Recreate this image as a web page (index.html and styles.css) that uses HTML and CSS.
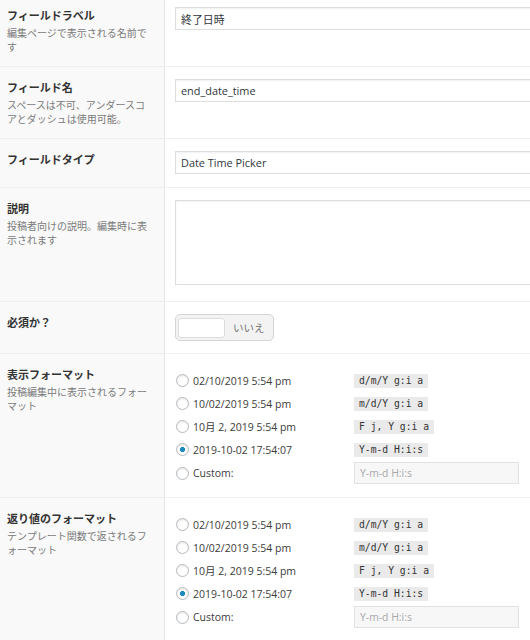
FILE: index.html
```html
<!DOCTYPE html>
<html lang="ja">
<head>
<meta charset="utf-8">
<title>ACF field settings</title>
<link rel="stylesheet" href="styles.css">
</head>
<body>
<div class="fields">
  <div class="row">
    <div class="label">
      <span class="title">フィールドラベル</span>
      <p class="desc">編集ページで表示される名前です</p>
    </div>
    <div class="cell">
      <input class="text" type="text" value="終了日時">
    </div>
  </div>

  <div class="row">
    <div class="label">
      <span class="title">フィールド名</span>
      <p class="desc">スペースは不可、アンダースコアとダッシュは使用可能。</p>
    </div>
    <div class="cell">
      <input class="text" type="text" value="end_date_time">
    </div>
  </div>

  <div class="row">
    <div class="label">
      <span class="title">フィールドタイプ</span>
    </div>
    <div class="cell">
      <div class="select">Date Time Picker</div>
    </div>
  </div>

  <div class="row">
    <div class="label">
      <span class="title">説明</span>
      <p class="desc">投稿者向けの説明。編集時に表示されます</p>
    </div>
    <div class="cell">
      <textarea class="area"></textarea>
    </div>
  </div>

  <div class="row">
    <div class="label">
      <span class="title">必須か？</span>
    </div>
    <div class="cell cell-switch">
      <div class="switch"><span class="slider"></span><span class="switch-text">いいえ</span></div>
    </div>
  </div>

  <div class="row">
    <div class="label">
      <span class="title">表示フォーマット</span>
      <p class="desc">投稿編集中に表示されるフォーマット</p>
    </div>
    <div class="cell cell-list">
      <ul class="radios">
        <li><label class="opt"><input type="radio" name="df">02/10/2019 5:54 pm</label><code>d/m/Y g:i a</code></li>
        <li><label class="opt"><input type="radio" name="df">10/02/2019 5:54 pm</label><code>m/d/Y g:i a</code></li>
        <li><label class="opt"><input type="radio" name="df">10月 2, 2019 5:54 pm</label><code>F j, Y g:i a</code></li>
        <li><label class="opt"><input type="radio" name="df" checked>2019-10-02 17:54:07</label><code>Y-m-d H:i:s</code></li>
        <li class="custom"><label class="opt"><input type="radio" name="df">Custom:</label><input class="custom-input" type="text" placeholder="Y-m-d H:i:s" disabled></li>
      </ul>
    </div>
  </div>

  <div class="row">
    <div class="label">
      <span class="title">返り値のフォーマット</span>
      <p class="desc">テンプレート関数で返されるフォーマット</p>
    </div>
    <div class="cell cell-list">
      <ul class="radios">
        <li><label class="opt"><input type="radio" name="rf">02/10/2019 5:54 pm</label><code>d/m/Y g:i a</code></li>
        <li><label class="opt"><input type="radio" name="rf">10/02/2019 5:54 pm</label><code>m/d/Y g:i a</code></li>
        <li><label class="opt"><input type="radio" name="rf">10月 2, 2019 5:54 pm</label><code>F j, Y g:i a</code></li>
        <li><label class="opt"><input type="radio" name="rf" checked>2019-10-02 17:54:07</label><code>Y-m-d H:i:s</code></li>
        <li class="custom"><label class="opt"><input type="radio" name="rf">Custom:</label><input class="custom-input" type="text" placeholder="Y-m-d H:i:s" disabled></li>
      </ul>
    </div>
  </div>
</div>
</body>
</html>
```
FILE: styles.css
```css
* { box-sizing: border-box; }
html, body { margin: 0; padding: 0; background: #fff; overflow: hidden; }
body {
  font-family: "Open Sans", "Noto Sans CJK JP", sans-serif;
  font-size: 12px;
  color: #444;
}
.fields { width: 720px; margin-top: -6px; }
.row {
  display: grid;
  grid-template-columns: 165px 1fr;
  border-top: 1px solid #eeeeee;
}
.label {
  background: #f9f9f9;
  border-right: 1px solid #e6e6e6;
  padding: 13px 12px 12px 7px;
  font-family: "Noto Sans CJK JP", sans-serif;
}
.title {
  display: block;
  font-weight: bold;
  font-size: 11px;
  line-height: 14px;
  color: #333;
}
.desc {
  margin: 4px 0 0;
  font-size: 10px;
  line-height: 14px;
  color: #7a7a7a;
}
.cell { padding: 12px 10px 13px; }
.cell-switch { padding-bottom: 12px; }
.cell-list { padding-bottom: 12px; }

.text, .select, .area {
  display: block;
  width: 100%;
  height: 23px;
  margin: 0;
  padding: 0 5px;
  border: 1px solid #dddddd;
  background: #fff;
  box-shadow: inset 0 1px 2px rgba(0, 0, 0, 0.06);
  font-family: "Open Sans", "Noto Sans CJK JP", sans-serif;
  font-size: 10.9px;
  line-height: 21px;
  color: #32373c;
  outline: none;
}
.area { height: 85px; margin-bottom: 3px; resize: none; }

.switch {
  display: flex;
  align-items: center;
  width: 99px;
  height: 27px;
  padding: 0 2px;
  border: 1px solid #d5d5d5;
  border-radius: 5px;
  background: #f3f3f3;
}
.slider {
  width: 47px;
  height: 20px;
  background: #fff;
  border: 1px solid #dcdcdc;
  border-radius: 3px;
}
.switch-text {
  margin-left: 8px;
  font-family: "Noto Sans CJK JP", sans-serif;
  font-size: 10.5px;
  color: #777;
}

.radios { list-style: none; margin: 3px 0 0; padding: 0; }
.radios li {
  display: flex;
  align-items: center;
  height: 23px;
}
.radios li.custom { height: 24px; }
.opt {
  display: flex;
  align-items: center;
  width: 179px;
  font-size: 10.5px;
  color: #3c3c3c;
}
.opt input {
  appearance: none;
  -webkit-appearance: none;
  flex: none;
  width: 13px;
  height: 13px;
  margin: 0 4px 0 1px;
  border: 1px solid #b4b9be;
  border-radius: 50%;
  background: #fff;
  box-shadow: inset 0 1px 2px rgba(0, 0, 0, 0.1);
}
.opt input:checked {
  background: radial-gradient(circle, #1e8cbe 0 2.3px, #fff 2.9px);
}
code {
  display: inline-block;
  height: 14px;
  padding: 0 5px;
  background: #eaeaea;
  font-family: "DejaVu Sans Mono", monospace;
  font-size: 9.7px;
  line-height: 14px;
  color: #333;
}
.custom-input {
  width: 165px;
  height: 22px;
  margin: 0;
  padding: 0 5px;
  border: 1px solid #e2e2e2;
  background: #f7f7f7;
  font-family: "Open Sans", "Noto Sans CJK JP", sans-serif;
  font-size: 10.4px;
}
.custom-input::placeholder { color: #a8a8a8; }
```
